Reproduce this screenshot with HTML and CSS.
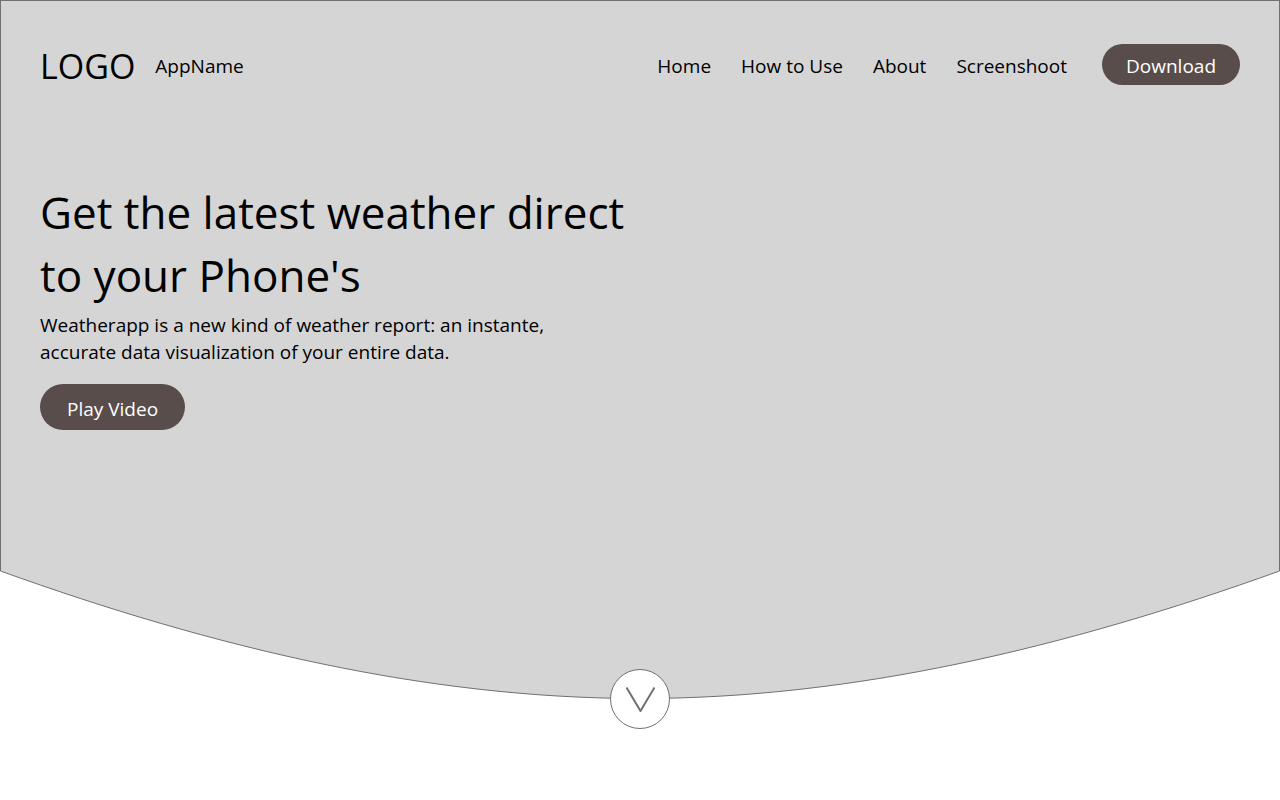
FILE: index.html
```html
<!DOCTYPE html>
<html lang="en">
<head>
<meta charset="utf-8">
<meta name="viewport" content="width=device-width, initial-scale=1">
<title>AppName</title>
<link rel="stylesheet" href="styles.css">
</head>
<body>
<div class="hero">
  <header class="topbar">
    <a class="brand" href="#"><span class="logo">LOGO</span><span class="app-name">AppName</span></a>
    <nav class="nav">
      <a href="#">Home</a>
      <a href="#">How to Use</a>
      <a href="#">About</a>
      <a href="#">Screenshoot</a>
      <button class="pill download" type="button">Download</button>
    </nav>
  </header>
  <main class="intro">
    <h1>Get the latest weather direct<br>to your Phone's</h1>
    <p>Weatherapp is a new kind of weather report: an instante,<br>accurate data visualization of your entire data.</p>
    <button class="pill play" type="button">Play Video</button>
  </main>
</div>
<div class="curve">
  <svg class="curve-shape" viewBox="0 0 1280 130" preserveAspectRatio="none" aria-hidden="true">
    <path class="curve-fill" d="M0 0V1C213 77.500 427 128.500 640 128.500S1067 77.500 1280 1V0Z"/>
    <path class="curve-line" d="M.5 0V1C213 77.500 427 128.500 640 128.500S1067 77.500 1279.500 1V0"/>
  </svg>
  <button class="scroll-down" type="button" aria-label="Scroll down">
    <svg width="30" height="26" viewBox="0 0 30 26" aria-hidden="true"><path d="M1.500 1.500L15.500 25L29.500 1.500"/></svg>
  </button>
</div>
</body>
</html>
```
FILE: styles.css
```css
* {
  box-sizing: border-box;
}

body {
  min-height: 100vh;
  margin: 0;
  background: #fff;
  color: #000;
  font-family: "Open Sans", "Noto Sans", sans-serif;
  font-size: 19px;
}

.hero {
  min-height: 570px;
  padding: 43px 39px 0;
  background: #d5d5d5;
  border: 1px solid #707070;
  border-bottom: 0;
}

.topbar,
.brand,
.nav {
  display: flex;
  align-items: center;
}

.topbar {
  align-items: flex-start;
  justify-content: space-between;
}

.brand {
  gap: 20px;
}

.nav {
  align-items: baseline;
  gap: 30px;
}

.topbar a {
  color: inherit;
  text-decoration: none;
}

.logo {
  font-size: 34px;
  line-height: 44px;
}

.pill {
  border: 0;
  border-radius: 23px;
  background: #584d4b;
  color: #fff;
  font: inherit;
}

.download {
  height: 41px;
  margin-left: 5px;
  padding: 3px 24px 0;
}

.intro {
  padding-top: 93px;
}

.intro h1 {
  margin: 0;
  font-size: 44px;
  font-weight: 400;
  line-height: 63px;
}

.intro p {
  margin: 5px 0 18px;
  line-height: 27px;
}

.play {
  height: 46px;
  padding: 3px 27px 0;
}

.curve {
  position: relative;
  padding-bottom: 100px;
}

.curve-shape {
  display: block;
  width: 100%;
  height: 130px;
}

.curve-fill {
  fill: #d5d5d5;
}

.curve-line {
  fill: none;
  stroke: #707070;
  vector-effect: non-scaling-stroke;
}

.scroll-down {
  position: absolute;
  top: 99px;
  left: calc(50% - 30px);
  display: grid;
  place-items: center;
  width: 60px;
  height: 60px;
  padding: 0;
  border: 1px solid #707070;
  border-radius: 50%;
  background: #fff;
}

.scroll-down path {
  fill: none;
  stroke: #707070;
  stroke-width: 2;
}
```
